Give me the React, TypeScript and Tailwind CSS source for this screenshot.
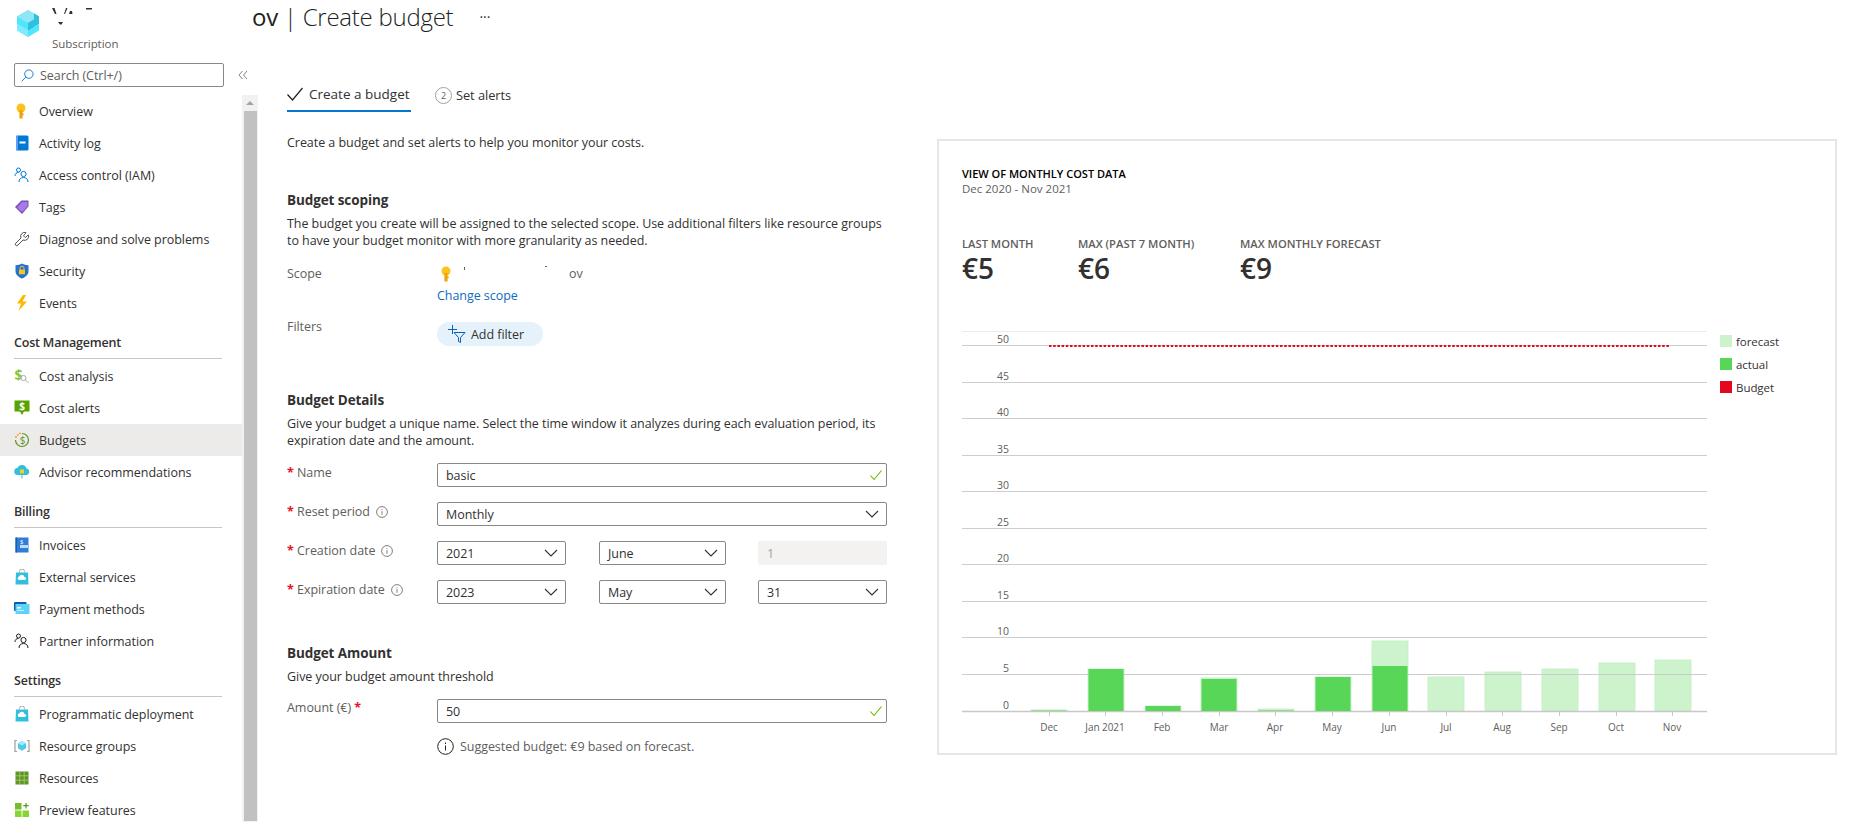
import React from 'react';
import { Wrench } from 'lucide-react';

const Ic: React.FC<{ name: string }> = ({ name }) => {
  const s = 'w-[16px] h-[16px] shrink-0';
  switch (name) {
    case 'key':
      return (
        <svg viewBox="0 0 16 16" className={s}>
          <circle cx="7" cy="5" r="4.500" fill="#fcc419" />
          <rect x="5.400" y="7" width="3.200" height="8.500" fill="#f0a30a" />
          <rect x="8" y="10.500" width="1.700" height="1.700" fill="#f0a30a" />
        </svg>
      );
    case 'log':
      return (
        <svg viewBox="0 0 16 16" className={s}>
          <rect x="2" y="0.5" width="12.5" height="15" rx="1.5" fill="#0078d4" />
          <rect x="2" y="0.5" width="2" height="15" rx="1" fill="#5ea0ef" />
          <rect x="5.5" y="6.5" width="6" height="2" fill="#fff" />
        </svg>
      );
    case 'iam':
      return (
        <svg viewBox="0 0 16 16" className={s} fill="none" stroke="#0078d4" strokeWidth="1">
          <circle cx="4.5" cy="3" r="2" />
          <path d="M1 9c0-2.5 1.5-3.5 3.5-3.5" />
          <circle cx="9.5" cy="7" r="2.6" />
          <path d="M5 15c0-3 2-4.5 4.5-4.5s4.5 1.500 4.500 4.500" />
        </svg>
      );
    case 'tag':
      return (
        <svg viewBox="0 0 16 16" className={s}>
          <path d="M1 8l6.500-6.500h7v6L8 15z" fill="#7a50b8" />
          <path d="M3 8.500l5-5.500h5.500v4.500L8 13z" fill="#a67be8" />
        </svg>
      );
    case 'shield':
      return (
        <svg viewBox="0 0 16 16" className={s}>
          <path d="M8 0.500c2 1.200 4 1.700 6.500 1.700v6c0 3.300-2.700 5.600-6.500 7.300-3.800-1.700-6.500-4-6.500-7.300v-6C4 2.200 6 1.700 8 .5z" fill="#2272d4" />
          <rect x="5" y="6.500" width="6" height="4.800" rx="0.500" fill="#fcc419" />
          <path d="M6 6.500V5.200a2 2 0 0 1 4 0v1.300" fill="none" stroke="#fcc419" />
        </svg>
      );
    case 'bolt':
      return (
        <svg viewBox="0 0 16 16" className={s}>
          <path d="M9 0L3 8.500h4L4.500 16 13 6.500H8.500L12 0z" fill="#fcb900" />
        </svg>
      );
    case 'analysis':
      return (
        <svg viewBox="0 0 16 16" className={s}>
          <text x="0.500" y="12" fontSize="14" fontWeight="700" fill="#86c440">$</text>
          <circle cx="9.500" cy="10" r="2.500" fill="#fff" stroke="#a8a8a8" />
          <path d="M11.500 12l3 3" stroke="#a8a8a8" />
        </svg>
      );
    case 'alerts':
      return (
        <svg viewBox="0 0 16 16" className="w-[16px] h-[16px] shrink-0">
          <path d="M0.500 0.500h15v11h-5.500L8 15l-2-3.500H.5z" fill="#57a300" />
          <text x="8" y="10" fontSize="10" fontWeight="700" textAnchor="middle" fill="#fff">$</text>
        </svg>
      );
    case 'budget':
      return (
        <svg viewBox="0 0 16 16" className={s}>
          <path d="M8 1.500a6.500 6.500 0 1 1-6.500 6.500" fill="none" stroke="#5e9624" strokeWidth="1.200" />
          <circle cx="2" cy="5" r="0.900" fill="#f7941d" />
          <circle cx="3.800" cy="2.800" r="0.900" fill="#f7941d" />
          <circle cx="6" cy="1.300" r="0.900" fill="#f7941d" />
          <text x="8.500" y="11.500" fontSize="10" textAnchor="middle" fill="#5e9624">$</text>
        </svg>
      );
    case 'advisor':
      return (
        <svg viewBox="0 0 16 16" className={s}>
          <path d="M4 11a3.500 3.500 0 0 1-.500-7 4.800 4.800 0 0 1 9 .500 3.300 3.300 0 0 1 0 6.500z" fill="#32bedd" />
          <rect x="6" y="5.500" width="4" height="4" fill="#fcd116" />
          <path d="M8 9.500v5" stroke="#50b4c8" />
        </svg>
      );
    case 'invoice':
      return (
        <svg viewBox="0 0 16 16" className={s}>
          <rect x="1.500" y="0.500" width="13" height="15" fill="#2f7dd8" />
          <rect x="1.500" y="0.500" width="1.500" height="15" fill="#1a5fb0" />
          <rect x="6" y="8" width="8" height="3" fill="#b9dcf8" />
          <text x="6" y="6.500" fontSize="6" fill="#fff">$</text>
        </svg>
      );
    case 'bag':
      return (
        <svg viewBox="0 0 16 16" className={s}>
          <path d="M5.500 3.500V2.500a2.500 2.500 0 0 1 5 0v1" fill="none" stroke="#a8a8a8" />
          <path d="M2 3.500h12l.5 12H1.500z" fill="#32bedd" />
          <path d="M5 11a1.800 1.800 0 0 1 .2-3.500 2.800 2.800 0 0 1 5.300.4A1.600 1.600 0 0 1 11 11z" fill="#fff" />
        </svg>
      );
    case 'card':
      return (
        <svg viewBox="0 0 16 16" className={s}>
          <rect x="0" y="1" width="12.500" height="9" rx="1" fill="#0a5fb4" />
          <rect x="1.500" y="3" width="14" height="10" rx="0.500" fill="#5ed3f5" />
          <rect x="3" y="6" width="4" height="1.500" fill="#fff" />
          <rect x="3" y="9" width="7" height="1" fill="#c8f1fd" />
        </svg>
      );
    case 'partner':
      return (
        <svg viewBox="0 0 16 16" className={s} fill="none" stroke="#201f1e" strokeWidth="1">
          <circle cx="4.500" cy="3" r="2" />
          <path d="M1 9c0-2.500 1.500-3.500 3.500-3.500" />
          <circle cx="9.500" cy="7" r="2.600" />
          <path d="M5 15c0-3 2-4.500 4.500-4.500s4.500 1.500 4.500 4.500" />
        </svg>
      );
    case 'rg':
      return (
        <svg viewBox="0 0 16 16" className={s}>
          <path d="M3 2.500H1v11h2M13 2.500h2v11h-2" fill="none" stroke="#a19f9d" strokeWidth="1.200" />
          <path d="M8 3l4 2.300v5L8 12.800 4 10.300v-5z" fill="#50c8ea" />
          <path d="M8 3l4 2.300L8 7.600 4 5.300z" fill="#9cebff" />
        </svg>
      );
    case 'grid':
      return (
        <svg viewBox="0 0 16 16" className={s}>
          <rect x="1.500" y="1.500" width="13" height="13" fill="#5e9624" />
          <path d="M5.800 1.500v13M10.200 1.500v13M1.500 5.800h13M1.500 10.200h13" stroke="#b5d98a" strokeWidth="0.700" />
        </svg>
      );
    case 'preview':
      return (
        <svg viewBox="0 0 16 16" className={s}>
          <rect x="1" y="1" width="6.500" height="6.500" fill="#76bc2d" />
          <rect x="1" y="8.500" width="6.500" height="6.500" fill="#86d633" />
          <rect x="8.500" y="8.500" width="6.500" height="6.500" fill="#86d633" />
          <path d="M12 1v5.500M9.300 3.700h5.400" stroke="#5e9624" strokeWidth="1.200" />
        </svg>
      );
    default:
      return <Wrench size={16} strokeWidth={1.2} color="#201f1e" className="shrink-0" />;
  }
};

const groups = [
  {
    title: '',
    items: [
      ['key', 'Overview'],
      ['log', 'Activity log'],
      ['iam', 'Access control (IAM)'],
      ['tag', 'Tags'],
      ['wrench', 'Diagnose and solve problems'],
      ['shield', 'Security'],
      ['bolt', 'Events'],
    ],
  },
  {
    title: 'Cost Management',
    items: [
      ['analysis', 'Cost analysis'],
      ['alerts', 'Cost alerts'],
      ['budget', 'Budgets'],
      ['advisor', 'Advisor recommendations'],
    ],
  },
  {
    title: 'Billing',
    items: [
      ['invoice', 'Invoices'],
      ['bag', 'External services'],
      ['card', 'Payment methods'],
      ['partner', 'Partner information'],
    ],
  },
  {
    title: 'Settings',
    items: [
      ['bag', 'Programmatic deployment'],
      ['rg', 'Resource groups'],
      ['grid', 'Resources'],
      ['preview', 'Preview features'],
    ],
  },
];

const Chevron = () => (
  <svg viewBox="0 0 14 8" className="w-[14px] h-[8px] shrink-0" fill="none" stroke="#323130" strokeWidth="1.100">
    <path d="M1 1l6 6 6-6" />
  </svg>
);

const GreenCheck = () => (
  <svg viewBox="0 0 12 12" className="w-[12px] h-[12px] shrink-0" fill="none" stroke="#6bb700" strokeWidth="1.100">
    <path d="M0.500 6.500l3.500 4 7.500-9" />
  </svg>
);

const InfoDot = () => (
  <svg viewBox="0 0 12 12" className="w-[12px] h-[12px] shrink-0" fill="none" stroke="#605e5c" strokeWidth="0.800">
    <circle cx="6" cy="6" r="5.400" />
    <path d="M6 5.200v3.600M6 3.200v1" />
  </svg>
);

const Select: React.FC<{ value: string; className?: string }> = ({ value, className }) => (
  <div className={`h-[24px] border border-[#8a8886] rounded-[2px] flex items-center justify-between pl-[8px] pr-[7px] text-[#323130] ${className ?? ''}`}>
    <span>{value}</span>
    <Chevron />
  </div>
);

const TextInput: React.FC<{ value: string }> = ({ value }) => (
  <div className="w-[450px] h-[24px] border border-[#8a8886] rounded-[2px] flex items-center justify-between pl-[8px] pr-[4px] text-[#323130]">
    <span>{value}</span>
    <GreenCheck />
  </div>
);

const Label: React.FC<{ text: string; info?: boolean }> = ({ text, info }) => (
  <div className="w-[150px] shrink-0 pt-[1px] h-[18px] flex items-center text-[#605e5c]">
    <span className="w-[10px] text-[#e81123] font-bold">*</span>
    <span>{text}</span>
    {info && <span className="ml-[6px]"><InfoDot /></span>}
  </div>
);

const bars = [
  { x: 1031, cx: 1049, m: 'Dec', top: 710, actual: 710 },
  { x: 1088, cx: 1105, m: 'Jan 2021', top: 669, actual: 669 },
  { x: 1145, cx: 1162, m: 'Feb', top: 706, actual: 706 },
  { x: 1201, cx: 1219, m: 'Mar', top: 678, actual: 679 },
  { x: 1258, cx: 1275, m: 'Apr', top: 709, actual: 710 },
  { x: 1315, cx: 1332, m: 'May', top: 677, actual: 677 },
  { x: 1372, cx: 1389, m: 'Jun', top: 641, actual: 666 },
  { x: 1428, cx: 1446, m: 'Jul', top: 677, actual: 0 },
  { x: 1485, cx: 1502, m: 'Aug', top: 672, actual: 0 },
  { x: 1542, cx: 1559, m: 'Sep', top: 669, actual: 0 },
  { x: 1599, cx: 1616, m: 'Oct', top: 663, actual: 0 },
  { x: 1655, cx: 1672, m: 'Nov', top: 660, actual: 0 },
];

const grid = [
  [345, '50'],
  [382, '45'],
  [418, '40'],
  [455, '35'],
  [491, '30'],
  [528, '25'],
  [564, '20'],
  [601, '15'],
  [637, '10'],
  [674, '5'],
  [711, '0'],
] as const;

const Chart = () => (
  <svg viewBox="962 325 746 415" className="w-[746px] h-[415px] shrink-0">
    <line x1="962" x2="1707" y1="331.500" y2="331.500" stroke="#ececec" />
    {bars.map((b) => (
      <g key={b.m}>
        <rect x={b.x} y={b.top} width="36" height={711 - b.top} fill="#cdf3cd" stroke="#bdeebd" strokeWidth="0.800" />
      </g>
    ))}
    {grid.map(([y, t]) => (
      <g key={t}>
        <line x1="962" x2="1707" y1={y + 0.5} y2={y + 0.5} stroke="#c8c8c8" strokeOpacity={y === 711 ? 1 : 0.9} strokeWidth={y === 711 ? 1.500 : 1} />
        <text x="1009" y={y - 2} fontSize="10.500" fill="#605e5c" textAnchor="end">{t}</text>
      </g>
    ))}
    {bars.filter((b) => b.actual > 0).map((b) => (
      <rect key={b.m} x={b.x + 0.5} y={b.actual} width="35" height={711 - b.actual} fill={b.m === 'Dec' || b.m === 'Apr' ? '#8fe08f' : '#57d658'} />
    ))}
    {bars.map((b) => (
      <g key={b.m}>
        <line x1={b.cx + 0.5} x2={b.cx + 0.5} y1="712" y2="716" stroke="#c8c8c8" />
        <text x={b.cx} y="731" fontSize="10" fill="#605e5c" textAnchor="middle">{b.m}</text>
      </g>
    ))}
    <line x1="1049" x2="1670" y1="346" y2="346" stroke="#e3081f" strokeWidth="2" strokeDasharray="2.500 1.700" />
  </svg>
);

const legend = [
  ['bg-[#cdf3cd]', 'forecast'],
  ['bg-[#57d658]', 'actual'],
  ['bg-[#e3081f]', 'Budget'],
];

const kpis = [
  ['LAST MONTH', '€5', 'w-[116px]'],
  ['MAX (PAST 7 MONTH)', '€6', 'w-[162px]'],
  ['MAX MONTHLY FORECAST', '€9', 'w-[200px]'],
];

export default function App() {
  return (
    <div className="h-[822px] w-[1856px] overflow-hidden bg-white text-[12.500px] leading-[17px] tracking-[-0.05px] text-[#323130] font-['Open_Sans','Noto_Sans',sans-serif]">
      {/* Header */}
      <div className="h-[52px] flex items-start pl-[16px] pt-[10px] relative">
        <svg viewBox="0 0 24 28" className="w-[24px] h-[28px] shrink-0 mr-[12px]">
          <path d="M12 0l11 6.500v14L12 27 1 20.500v-14z" fill="#50e6ff" />
          <path d="M12 0l11 6.500L12 13 1 6.500z" fill="#8fe6f7" />
          <path d="M18 3.200l5 3.300v7L18 16.500z" fill="#32bedd" />
          <path d="M12 13l6-3.500V17l-6 3.500z" fill="#32bedd" />
          <path d="M1 13.500L12 20v7L1 20.500z" fill="#83e9ff" />
        </svg>
        <div>
          <div className="flex items-start h-[24px] -mt-[9px]">
            {/* what is left of the blanked out name */}
            <svg viewBox="0 0 44 18" className="w-[44px] h-[18px] mt-[6px] shrink-0">
              <path d="M0 1h2.500L4.500 7H3zM14 1h1.500l-2.500 6h-1zM18 4l2 0 .5 3H17zM34 1h6v1.500h-6z" fill="#323130" />
              <path d="M6 15h5l-1.500 2.500H8z" fill="#323130" />
            </svg>
            <span className="ml-[156px] text-[24px] leading-[32px] font-light tracking-[-0.25px] whitespace-nowrap text-[#201f1e]">
              <span className="font-normal">ov</span> | Create budget
            </span>
            <span className="ml-[26px] text-[14px] leading-[32px]">···</span>
          </div>
          <div className="mt-[11px] text-[11.500px] leading-[16px] text-[#605e5c]">Subscription</div>
        </div>
      </div>

      <div className="flex">
        {/* Sidebar */}
        <div className="w-[258px] shrink-0 h-[770px] overflow-hidden">
          <div className="flex items-center mt-[11px] mb-[8px] h-[24px] pl-[14px]">
            <div className="w-[210px] h-[24px] border border-[#8a8886] rounded-[2px] flex items-center pl-[6px] text-[#605e5c]">
              <svg viewBox="0 0 14 14" className="w-[13px] h-[13px] mr-[6px]" fill="none" stroke="#0078d4" strokeWidth="1">
                <circle cx="8.500" cy="5.500" r="4.500" />
                <path d="M5.200 8.800L0.800 13.200" />
              </svg>
              Search (Ctrl+/)
            </div>
            <svg viewBox="0 0 10 10" className="w-[10px] h-[10px] ml-[14px]" fill="none" stroke="#8a8886" strokeWidth="1">
              <path d="M4.500 1L1 5l3.500 4M9 1L5.500 5 9 9" />
            </svg>
          </div>
          <div className="flex">
            <nav className="w-[242px] shrink-0">
              {groups.map((g) => (
                <div key={g.title}>
                  {g.title && (
                    <div className="mx-[14px] w-[208px] h-[40px] mb-[1px] pt-[7px] border-b border-[#c8c6c4] flex items-center font-semibold tracking-[-0.2px] text-[#323130]">
                      {g.title}
                    </div>
                  )}
                  {g.items.map(([icon, label]) => (
                    <div key={label} className={`h-[32px] flex items-center pl-[14px] gap-[9px] ${label === 'Budgets' ? 'bg-[#edebe9]' : ''}`}>
                      <Ic name={icon} />
                      <span className="whitespace-nowrap">{label}</span>
                    </div>
                  ))}
                </div>
              ))}
            </nav>
            <div className="w-[16px] h-[730px] bg-[#f1f1f1] pl-[2px]">
              <div className="h-[16px] flex items-center justify-center pr-[3px]">
                <div className="w-0 h-0 border-x-[4px] border-x-transparent border-b-[4px] border-b-[#a3a3a3]" />
              </div>
              <div className="w-[13px] h-[710px] bg-[#c1c1c1]" />
            </div>
          </div>
        </div>

        {/* Main */}
        <div className="pl-[29px] flex-1">
          <div className="flex mt-[27px] h-[33px]">
            <div className="w-[124px] h-[33px] border-b-2 border-[#0078d4] flex items-center pb-[1px]">
              <svg viewBox="0 0 16 14" className="w-[16px] h-[14px] mr-[6px]" fill="none" stroke="#201f1e" strokeWidth="1.200">
                <path d="M0.500 7.500l5 5.500L15.500 1" />
              </svg>
              <span className="whitespace-nowrap text-[13.500px] font-medium tracking-normal">Create a budget</span>
            </div>
            <div className="ml-[24px] flex items-center pb-[1px]">
              <span className="w-[17px] h-[17px] rounded-full border border-[#a19f9d] flex items-center justify-center text-[9px] leading-none text-[#605e5c] mr-[4px]">2</span>
              <span className="whitespace-nowrap text-[12.800px]">Set alerts</span>
            </div>
          </div>

          <div className="flex mt-[22px]">
            {/* Form */}
            <div className="w-[600px] shrink-0">
              <p>Create a budget and set alerts to help you monitor your costs.</p>

              <h3 className="mt-[39px] h-[20px] leading-[20px] text-[13.500px] font-bold tracking-[-0.1px]">Budget scoping</h3>
              <p className="mt-[5px]">The budget you create will be assigned to the selected scope. Use additional filters like resource groups to have your budget monitor with more granularity as needed.</p>

              <div className="flex mt-[16px]">
                <div className="w-[150px] text-[#605e5c]">Scope</div>
                <div className="flex items-center">
                  <span className="ml-[2px]"><Ic name="key" /></span>
                  <svg viewBox="0 0 114 17" className="w-[114px] h-[17px]">
                    <path d="M9 2h1v3H9zM90 1h2v1h-2z" fill="#605e5c" />
                  </svg>
                  <span className="text-[#605e5c]">ov</span>
                </div>
              </div>
              <a className="block mt-[5px] ml-[150px] text-[#0f6cbd]">Change scope</a>

              <div className="flex mt-[14px]">
                <div className="w-[150px] text-[#605e5c]">Filters</div>
                <div className="mt-[4px] w-[106px] h-[24px] rounded-full bg-[#e5f1fb] flex items-center pl-[10px]">
                  <svg viewBox="0 0 19 18" className="w-[19px] h-[18px] mr-[5px]" fill="none" stroke="#0f5fb0" strokeWidth="1">
                    <path d="M1 4.500h9M5.500 0v9M7 7.500h11l-4.500 5v5l-2-1v-4z" />
                  </svg>
                  Add filter
                </div>
              </div>

              <h3 className="mt-[44px] h-[20px] leading-[20px] text-[13.500px] font-bold tracking-[-0.1px]">Budget Details</h3>
              <p className="mt-[5px]">Give your budget a unique name. Select the time window it analyzes during each evaluation period, its expiration date and the amount.</p>

              <div className="flex mt-[14px]">
                <Label text="Name" />
                <TextInput value="basic" />
              </div>
              <div className="flex mt-[15px]">
                <Label text="Reset period" info />
                <Select value="Monthly" className="w-[450px]" />
              </div>
              <div className="flex mt-[15px]">
                <Label text="Creation date" info />
                <div className="flex">
                  <Select value="2021" className="w-[129px]" />
                  <Select value="June" className="w-[127px] ml-[33px]" />
                  <div className="w-[129px] h-[24px] ml-[32px] bg-[#f3f2f1] rounded-[2px] flex items-center pl-[9px] text-[#a19f9d]">1</div>
                </div>
              </div>
              <div className="flex mt-[15px]">
                <Label text="Expiration date" info />
                <div className="flex">
                  <Select value="2023" className="w-[129px]" />
                  <Select value="May" className="w-[127px] ml-[33px]" />
                  <Select value="31" className="w-[129px] ml-[32px]" />
                </div>
              </div>

              <h3 className="mt-[39px] h-[20px] leading-[20px] text-[13.500px] font-bold tracking-[-0.1px]">Budget Amount</h3>
              <p className="mt-[5px]">Give your budget amount threshold</p>

              <div className="flex mt-[14px]">
                <div className="w-[150px] text-[#605e5c]">
                  Amount (€) <span className="text-[#e81123] font-bold">*</span>
                </div>
                <TextInput value="50" />
              </div>
              <div className="flex items-center mt-[15px] ml-[150px] text-[#605e5c]">
                <svg viewBox="0 0 17 17" className="w-[17px] h-[17px] mr-[6px]" fill="none" stroke="#201f1e" strokeWidth="1">
                  <circle cx="8.500" cy="8.500" r="7.800" />
                  <path d="M8.500 7.500v5M8.500 4.500v1.500" />
                </svg>
                Suggested budget: €9 based on forecast.
              </div>
            </div>

            {/* Cost card */}
            <div className="ml-[50px] mt-[5px] w-[900px] h-[616px] border-2 border-[#e6e6e6] pl-[23px] pt-[25px] shrink-0">
              <div className="h-[15px] leading-[15px] text-[11px] font-semibold tracking-normal text-black whitespace-nowrap">VIEW OF MONTHLY COST DATA</div>
              <div className="h-[16px] leading-[16px] text-[11.500px] tracking-normal text-[#605e5c]">Dec 2020 - Nov 2021</div>
              <div className="flex mt-[40px]">
                {kpis.map(([label, value, w]) => (
                  <div key={label} className={w}>
                    <div className="h-[14px] leading-[14px] text-[11.200px] font-semibold tracking-normal text-[#605e5c] whitespace-nowrap">{label}</div>
                    <div className="mt-[1px] h-[32px] leading-[32px] text-[28px] font-semibold text-[#323130]">{value}</div>
                  </div>
                ))}
              </div>
              <div className="flex mt-[41px]">
                <Chart />
                <div className="ml-[12px] pt-[10px] flex flex-col gap-[11px]">
                  {legend.map(([c, t]) => (
                    <div key={t} className="h-[12px] flex items-center gap-[4px] text-[11.500px] text-[#323130]">
                      <span className={`w-[12px] h-[12px] ${c}`} />
                      {t}
                    </div>
                  ))}
                </div>
              </div>
            </div>
          </div>
        </div>
      </div>
    </div>
  );
}
